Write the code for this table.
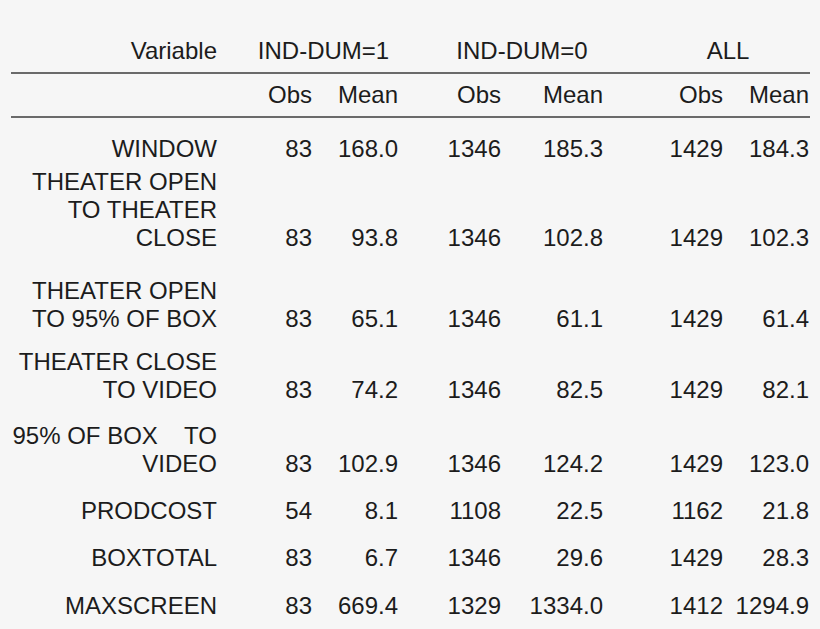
import React from "react";

type Row = {
  label: string[];
  values: string[];
  mt: string;
};

const rows: Row[] = [
  { label: ["WINDOW"], values: ["83", "168.0", "1346", "185.3", "1429", "184.3"], mt: "mt-[17px]" },
  {
    label: ["THEATER OPEN", "TO THEATER", "CLOSE"],
    values: ["83", "93.8", "1346", "102.8", "1429", "102.3"],
    mt: "mt-[5px]",
  },
  {
    label: ["THEATER OPEN", "TO 95% OF BOX"],
    values: ["83", "65.1", "1346", "61.1", "1429", "61.4"],
    mt: "mt-[25px]",
  },
  {
    label: ["THEATER CLOSE", "TO VIDEO"],
    values: ["83", "74.2", "1346", "82.5", "1429", "82.1"],
    mt: "mt-[15px]",
  },
  {
    label: ["95% OF BOX    TO", "VIDEO"],
    values: ["83", "102.9", "1346", "124.2", "1429", "123.0"],
    mt: "mt-[18px]",
  },
  { label: ["PRODCOST"], values: ["54", "8.1", "1108", "22.5", "1162", "21.8"], mt: "mt-[19px]" },
  { label: ["BOXTOTAL"], values: ["83", "6.7", "1346", "29.6", "1429", "28.3"], mt: "mt-[19px]" },
  { label: ["MAXSCREEN"], values: ["83", "669.4", "1329", "1334.0", "1412", "1294.9"], mt: "mt-[20px]" },
];

const cols = "grid grid-cols-[217px_95px_86px_103px_102px_120px_86px] items-end";

const Rule = () => <div className="ml-[11px] w-[799px] h-[2px] bg-[#6a6a6a]" />;

export default function App() {
  return (
    <div className="w-[820px] h-[629px] bg-[#f6f6f6] text-[#1c1c1c] font-['Liberation_Sans',Arial,sans-serif] text-[24px] leading-[28px] overflow-hidden">
      <div className={`${cols} pt-[37px] pb-[7px]`}>
        <div className="text-right">Variable</div>
        <div className="col-span-2 text-center pl-[32px]">IND-DUM=1</div>
        <div className="col-span-2 text-center pl-[43px]">IND-DUM=0</div>
        <div className="col-span-2 text-center pl-[44px]">ALL</div>
      </div>
      <Rule />
      <div className={`${cols} pt-[7px] pb-[7px]`}>
        <div />
        {["Obs", "Mean", "Obs", "Mean", "Obs", "Mean"].map((h, i) => (
          <div key={i} className="text-right">
            {h}
          </div>
        ))}
      </div>
      <Rule />
      {rows.map((r, i) => (
        <div key={i} className={`${cols} ${r.mt}`}>
          <div className="text-right whitespace-pre">
            {r.label.map((l, j) => (
              <div key={j}>{l}</div>
            ))}
          </div>
          {r.values.map((v, j) => (
            <div key={j} className="text-right">
              {v}
            </div>
          ))}
        </div>
      ))}
    </div>
  );
}
